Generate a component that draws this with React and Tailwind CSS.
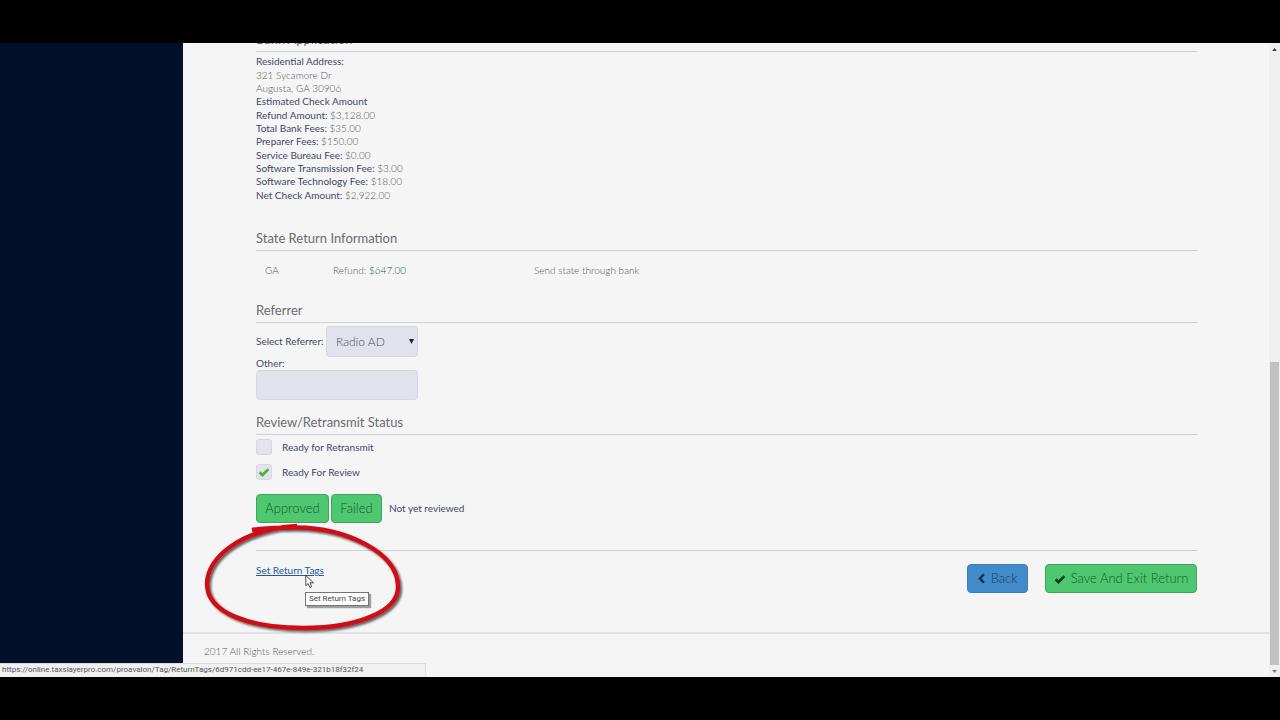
import React from "react";

const fees = [
  ["Refund Amount:", "$3,128.00"],
  ["Total Bank Fees:", "$35.00"],
  ["Preparer Fees:", "$150.00"],
  ["Service Bureau Fee:", "$0.00"],
  ["Software Transmission Fee:", "$3.00"],
  ["Software Technology Fee:", "$18.00"],
  ["Net Check Amount:", "$2,922.00"],
];

function Heading({ children }) {
  return (
    <h2 className="h-[22px] border-b border-[#cfcfd1] text-[13px] leading-[18px] text-[#6b6b6f]">
      {children}
    </h2>
  );
}

function Check({ className }) {
  return (
    <svg viewBox="0 0 12 10" className={className} aria-hidden="true">
      <path d="M1.6 5.2 4.5 8 10.4 2.1" fill="none" stroke="currentColor" strokeWidth="2.7" />
    </svg>
  );
}

function Tick({ id, label, defaultChecked }) {
  return (
    <div className="flex h-[16px] items-center">
      <span className="relative flex">
        <input
          id={id}
          type="checkbox"
          defaultChecked={defaultChecked}
          className="peer size-[16px] appearance-none rounded-[3px] border border-[#d6d7e2] bg-[#e2e3ec]"
        />
        <Check className="pointer-events-none absolute top-[3px] left-[2px] hidden h-[10px] w-[12px] text-[#4fb52c] peer-checked:block" />
      </span>
      <label htmlFor={id} className="pl-[10px] text-[10px] leading-[14px]">
        {label}
      </label>
    </div>
  );
}

export default function App() {
  return (
    <div className="flex h-screen flex-col bg-black py-[43px] font-['Lato','Liberation_Sans',sans-serif] text-[10px] text-[#43466c]">
      <div className="relative flex min-h-0 flex-1 bg-[#f5f5f5]">
        <aside className="w-[183px] shrink-0 bg-[#031029]" />

        <div className="flex min-w-0 flex-1 flex-col overflow-hidden">
          <main className="-mt-[13px] flex-1 pr-[72px] pl-[73px]">
            <Heading>Bank Application</Heading>
            <div className="mt-[3px] grid h-[147px] auto-rows-fr items-center">
              <p>Residential Address:</p>
              <p className="font-light text-[#55555a]">321 Sycamore Dr</p>
              <p className="font-light text-[#55555a]">Augusta, GA 30906</p>
              <p>Estimated Check Amount</p>
              {fees.map(([name, value]) => (
                <p key={name}>
                  {name} <span className="font-light text-[#55555a]">{value}</span>
                </p>
              ))}
            </div>

            <div className="mt-[27px]">
              <Heading>State Return Information</Heading>
            </div>
            <table className="mt-[12px] w-full table-fixed text-left font-light text-[#55555a]">
              <tbody>
                <tr className="h-[14px]">
                  <td className="w-[77px] pl-[9px]">GA</td>
                  <td className="w-[201px]">
                    Refund: <span className="text-[#1f5c39]">$647.00</span>
                  </td>
                  <td>Send state through bank</td>
                </tr>
              </tbody>
            </table>

            <div className="mt-[23px]">
              <Heading>Referrer</Heading>
            </div>
            <div className="mt-[3px] w-[162px]">
              <div className="flex items-center justify-between">
                <label htmlFor="referrer">Select Referrer:</label>
                <span className="relative flex">
                  <select
                    id="referrer"
                    className="h-[31px] w-[92px] appearance-none rounded-[4px] border border-[#d6d7e6] bg-[#e1e2ec] pl-[9px] text-[12px] font-light text-[#4d4e58]"
                  >
                    <option>Radio AD</option>
                  </select>
                  <svg viewBox="0 0 6 6" className="pointer-events-none absolute top-[13px] right-[4px] size-[5px] fill-[#222]" aria-hidden="true">
                    <path d="M0 0h6L3 6z" />
                  </svg>
                </span>
              </div>
              <label htmlFor="other" className="block h-[13px] leading-[12px]">
                Other:
              </label>
              <input
                id="other"
                type="text"
                className="block h-[30px] w-full rounded-[4px] border border-[#d6d7e6] bg-[#e1e2ec] px-[9px] text-[12px]"
              />
            </div>

            <div className="mt-[13px]">
              <Heading>Review/Retransmit Status</Heading>
            </div>
            <div className="mt-[4px] flex flex-col gap-[9px]">
              <Tick id="retransmit" label="Ready for Retransmit" />
              <Tick id="review" label="Ready For Review" defaultChecked />
            </div>
            <div className="mt-[14px] flex items-center gap-[2px]">
              <button type="button" className="h-[29px] w-[73px] rounded-[4px] border border-[#3fa55c] bg-[#4fc770] text-[13px] font-light text-[#14592c]">
                Approved
              </button>
              <button type="button" className="h-[29px] w-[51px] rounded-[4px] border border-[#3fa55c] bg-[#4fc770] text-[13px] font-light text-[#14592c]">
                Failed
              </button>
              <span className="pl-[5px]">Not yet reviewed</span>
            </div>

            <div className="mt-[27px] flex items-start justify-between border-t border-[#cfcfd1] pt-[13px]">
              <a href="#tags" className="text-[10px] leading-[12px] text-[#1f5a9c] underline">
                Set Return Tags
              </a>
              <div className="flex gap-[17px]">
                <button type="button" className="flex h-[29px] w-[61px] items-center justify-center gap-[6px] rounded-[4px] border border-[#3d7cb5] bg-[#428bca] text-[13px] font-light text-[#173f66]">
                  <svg viewBox="0 0 8 12" className="h-[11px] w-[7px] text-[#0c2b4a]" aria-hidden="true">
                    <path d="M6.8 1.2 2.2 6l4.6 4.8" fill="none" stroke="currentColor" strokeWidth="2.6" />
                  </svg>
                  Back
                </button>
                <button type="button" className="flex h-[29px] w-[152px] items-center justify-center gap-[5px] rounded-[4px] border border-[#3fa55c] bg-[#4fc770] text-[13px] font-light text-[#14592c]">
                  <Check className="h-[10px] w-[12px] text-[#0c4020]" />
                  Save And Exit Return
                </button>
              </div>
            </div>
          </main>
          <footer className="h-[45px] shrink-0 border-t-2 border-[#e2e2e4] pt-[10px] pl-[21px] text-[10px] leading-[14px] font-light text-[#55555a]">
            2017 All Rights Reserved.
          </footer>
        </div>

        <div className="flex w-[11px] shrink-0 flex-col items-center bg-[#efefef] pt-[5px] pb-[4px]">
          <svg viewBox="0 0 6 4" className="h-[3px] w-[5px] fill-[#333]" aria-hidden="true">
            <path d="M3 0l3 4H0z" />
          </svg>
          <div className="mt-auto mb-[5px] h-[303px] w-[9px] bg-[#c1c1c1]" />
          <svg viewBox="0 0 6 4" className="h-[3px] w-[5px] fill-[#777]" aria-hidden="true">
            <path d="M3 4l3-4H0z" />
          </svg>
        </div>

        <svg viewBox="0 0 210 120" className="pointer-events-none absolute bottom-[39px] left-[198px] h-[120px] w-[210px]" aria-hidden="true">
          <defs>
            <filter id="ringShadow" x="-10%" y="-10%" width="120%" height="125%">
              <feDropShadow dx="2" dy="2" stdDeviation="1.3" floodColor="#000" floodOpacity="0.6" />
            </filter>
          </defs>
          <g filter="url(#ringShadow)" fill="none" stroke="#cf0a18" strokeLinecap="butt">
            <path
              d="M54 12C66 10 82 9.500 98 9.500C148 10 199 34 200 68C201 95 155 110 106 110C52 110 9 95 9 66C9 39 44 11 99 8"
              strokeWidth="4.400"
            />
          </g>
        </svg>

        <svg viewBox="0 0 10 14" className="pointer-events-none absolute bottom-[88px] left-[305px] h-[15px] w-[10px]" aria-hidden="true">
          <path d="M.8 1v10.200l2.400-2.200 1.700 4 1.800-.8-1.700-3.900h3.500z" fill="#fff" stroke="#222" strokeWidth=".8" />
        </svg>
        <div
          role="tooltip"
          className="absolute bottom-[71px] left-[305px] border border-[#767676] bg-white px-[3px] font-['Roboto',sans-serif] text-[8px] leading-[12px] text-[#444] shadow-[2px_2px_1px_rgba(0,0,0,0.35)]"
        >
          Set Return Tags
        </div>
        <div className="absolute bottom-0 left-0 h-[14px] w-[426px] border-t border-r border-[#dcdcdc] bg-[#f1f1f1] pl-[2px] font-['Roboto',sans-serif] text-[8px] leading-[12px] text-[#555]">
          https://online.taxslayerpro.com/proavalon/Tag/ReturnTags/6d971cdd-ee17-467e-849e-321b18f32f24
        </div>
      </div>
    </div>
  );
}
